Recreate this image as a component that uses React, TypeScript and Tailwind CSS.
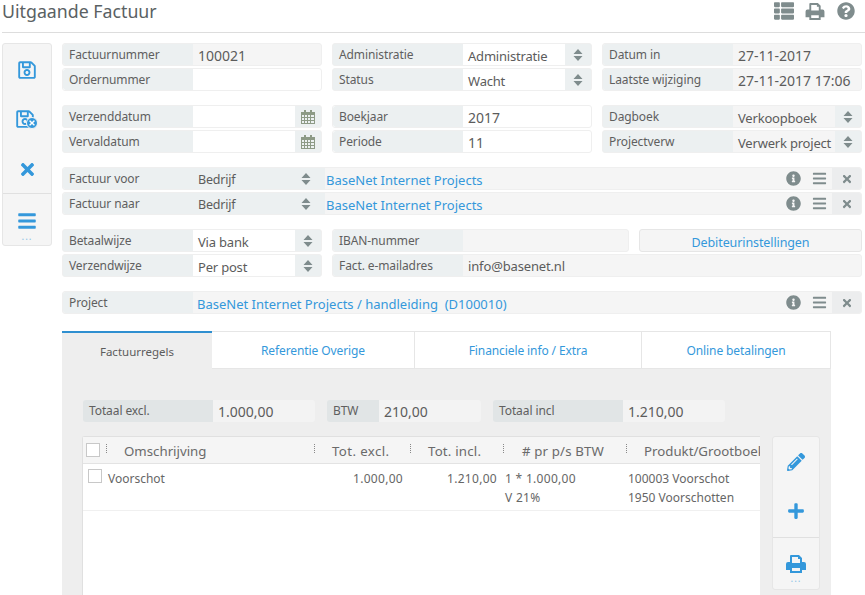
import React from 'react';
import { FaBars, FaInfoCircle, FaPencilAlt, FaPlus, FaQuestionCircle, FaRegSave, FaThList, FaTimes } from 'react-icons/fa';

const PrintIcon = ({ className }: { className?: string }) => (
  <svg viewBox="0 0 20 18" className={className} fill="currentColor">
    <path fillRule="evenodd" d="M5 0h8l3 3v4h2a2 2 0 0 1 2 2v6h-4v3H4v-3H0V9a2 2 0 0 1 2-2h2V1a1 1 0 0 1 1-1zm1 2v6h8V4h-2V2H6zM6 13v3h8v-3H6z" />
  </svg>
);

const SortIcon = ({ className = '' }: { className?: string }) => (
  <svg viewBox="0 0 10 12" className={`w-[10px] h-[12px] ${className}`} fill="currentColor">
    <path d="M5 0l4.5 5H.5zM5 12L.5 7h9z" />
  </svg>
);

const CalendarIcon = () => (
  <svg viewBox="0 0 14 14" className="w-[14px] h-[14px]" fill="currentColor">
    <path fillRule="evenodd" d="M3 0h2v2h4V0h2v2h3v12H0V2h3zM1 5v2h2V5zm3 0v2h2V5zm3 0v2h2V5zm3 0v2h3V5zM1 8v2h2V8zm3 0v2h2V8zm3 0v2h2V8zm3 0v2h3V8zM1 11v2h2v-2zm3 0v2h2v-2zm3 0v2h2v-2zm3 0v2h3v-2z" />
  </svg>
);

const SaveCancelIcon = () => (
  <div className="relative w-[22px] h-[20px]">
    <FaRegSave className="w-[20px] h-[20px] -ml-[1px]" />
    <div className="absolute right-0 bottom-0 w-[12px] h-[12px] rounded-full bg-[#3498db] border border-[#f5f5f5] flex items-center justify-center">
      <FaTimes className="w-[8px] h-[8px] text-white" />
    </div>
  </div>
);

const Label = ({ children }: { children: React.ReactNode }) => (
  <div className="w-[130px] shrink-0 bg-[#ecf0f1] pl-[6px] h-full flex items-center text-[12px] tracking-[-0.1px] text-[#5f5f5f] rounded-l-[3px]">
    {children}
  </div>
);

const Row = ({ className = '', children }: { className?: string; children: React.ReactNode }) => (
  <div className={`h-[23px] flex items-stretch rounded-[3px] border border-[#efefef] overflow-hidden ${className}`}>{children}</div>
);

const TextField = ({ label, value }: { label: string; value?: string }) => (
  <Row className="bg-white">
    <Label>{label}</Label>
    <div className="flex-1 pl-[5px] pt-[1px] flex items-center text-[14px] text-[#5c5c5c] whitespace-nowrap">{value}</div>
  </Row>
);

const ReadField = ({ label, value, small }: { label: string; value?: string; small?: boolean }) => (
  <Row className="bg-[#f5f5f5]">
    <Label>{label}</Label>
    <div className={`flex-1 pl-[5px] flex items-center ${small ? 'pt-[3px] text-[13px] tracking-[-0.15px]' : 'pt-[1px] text-[14px]'} text-[#5c5c5c] whitespace-nowrap`}>{value}</div>
  </Row>
);

const DateField = ({ label }: { label: string }) => (
  <Row className="bg-[#ecf0f1]">
    <Label>{label}</Label>
    <div className="w-[102px] bg-white" />
    <div className="flex-1 flex items-center justify-center text-[#8d9a86]">
      <CalendarIcon />
    </div>
  </Row>
);

const SelectField = ({ label, value, white = true }: { label: string; value: string; white?: boolean }) => (
  <Row className="bg-[#ecf0f1]">
    <Label>{label}</Label>
    <div className={`w-[102px] ${white ? 'bg-white' : 'bg-[#f5f5f5]'} pl-[5px] pt-[4px] flex items-center text-[13px] tracking-[-0.2px] text-[#5c5c5c] whitespace-nowrap overflow-hidden`}>{value}</div>
    <div className="flex-1 flex items-center justify-center text-[#7f8c8d]">
      <SortIcon />
    </div>
  </Row>
);

const RowActions = () => (
  <div className="flex items-center text-[#7f8c8d]">
    <FaInfoCircle className="w-[15px] h-[15px] mr-[11px]" />
    <FaBars className="w-[15px] h-[15px] mr-[5px]" />
    <div className="w-[29px] h-[23px] bg-[#ecedee] flex items-center justify-center">
      <FaTimes className="w-[12px] h-[12px]" />
    </div>
  </div>
);

const RelationRow = ({ label }: { label: string }) => (
  <Row className="bg-[#f5f5f5]">
    <Label>{label}</Label>
    <div className="w-[132px] bg-[#ecf0f1] flex items-center text-[12.5px] tracking-[-0.2px] text-[#5c5c5c]">
      <div className="flex-1 pl-[5px] pt-[3px]">Bedrijf</div>
      <SortIcon className="mr-[14px] text-[#7f8c8d]" />
    </div>
    <div className="flex-1 pl-[1px] pt-[4px] flex items-center text-[13px] text-[#3498db]">BaseNet Internet Projects</div>
    <RowActions />
  </Row>
);

const SideButton = ({ children }: { children: React.ReactNode }) => (
  <div className="flex items-center justify-center text-[#3498db]">{children}</div>
);

const Dots = () => <div className="mt-[2px] h-[8px] text-[10px] leading-[6px] text-center tracking-[1px] text-[#8fc3e6]">...</div>;

const Tab = ({ w, active, children }: { w: string; active?: boolean; children: React.ReactNode }) => (
  <div className={`${w} h-[38px] flex items-center justify-center pt-[1px] ${active ? 'text-[11.5px] bg-[#eeeeee] border-t-2 border-[#2f8fd0] text-[#5c5c5c]' : 'text-[12px] tracking-[-0.1px] bg-white border-t border-r border-b border-[#e6e6e6] text-[#3498db]'}`}>
    {children}
  </div>
);

const Total = ({ label, value, lw }: { label: string; value: string; lw: string }) => (
  <div className="flex h-[22px] rounded-[3px] overflow-hidden">
    <div className={`${lw} bg-[#e1e5e6] pl-[6px] flex items-center text-[12px] tracking-[-0.1px] text-[#5f5f5f]`}>{label}</div>
    <div className="w-[102px] bg-[#f3f3f3] pl-[5px] flex items-center text-[14px] text-[#5c5c5c]">{value}</div>
  </div>
);

const Handle = () => <div className="w-[1px] h-[9px] -mt-[4px] shrink-0 border-l border-dotted border-[#888888]" />;

const HeadCell = ({ w, className = '', children }: { w: string; className?: string; children: React.ReactNode }) => (
  <div className={`${w} shrink-0 pl-[17px] pt-[4px] whitespace-nowrap ${className}`}>{children}</div>
);

const App = () => {
  return (
    <div className="w-[865px] h-[595px] overflow-hidden bg-white font-['Noto_Sans','Open_Sans',sans-serif]">
      <div className="h-[33px] ml-[2px] border-b border-[#dddddd] flex items-center justify-between pb-[10px]">
        <h1 className="text-[17.75px] text-[#5a6163]">Uitgaande Factuur</h1>
        <div className="flex items-center mr-[10px] text-[#7f8c8d]">
          <FaThList className="w-[20px] h-[20px] mr-[11px]" />
          <PrintIcon className="w-[20px] h-[17px] mr-[12px]" />
          <FaQuestionCircle className="w-[18px] h-[18px]" />
        </div>
      </div>

      <div className="flex mt-[10px] ml-[2px]">
        {/* side toolbar */}
        <div className="w-[50px] h-[203px] shrink-0 bg-[#f5f5f5] border border-[#e6e6e6] rounded-[3px] flex flex-col">
          <div className="h-[150px] flex flex-col justify-around pt-[3px] border-b border-[#e0e0e0]">
            <SideButton><FaRegSave className="w-[20px] h-[20px] -mt-[2px]" /></SideButton>
            <SideButton><SaveCancelIcon /></SideButton>
            <SideButton><FaTimes className="w-[19px] h-[19px] mt-[2px]" /></SideButton>
          </div>
          <div className="flex-1 pt-[17px]">
            <SideButton><FaBars className="w-[20px] h-[20px]" /></SideButton>
            <Dots />
          </div>
        </div>

        <div className="ml-[10px] w-[800px]">
          <div className="grid grid-cols-[260px_260px_260px] gap-x-[10px] gap-y-[2px]">
            <ReadField label="Factuurnummer" value="100021" />
            <SelectField label="Administratie" value="Administratie" />
            <ReadField label="Datum in" value="27-11-2017" />
            <TextField label="Ordernummer" />
            <SelectField label="Status" value="Wacht" />
            <ReadField label="Laatste wijziging" value="27-11-2017 17:06" />
          </div>

          <div className="mt-[14px] grid grid-cols-[260px_260px_260px] gap-x-[10px] gap-y-[2px]">
            <DateField label="Verzenddatum" />
            <TextField label="Boekjaar" value="2017" />
            <SelectField label="Dagboek" value="Verkoopboek" white={false} />
            <DateField label="Vervaldatum" />
            <TextField label="Periode" value="11" />
            <SelectField label="Projectverw" value="Verwerk project" white={false} />
          </div>

          <div className="mt-[14px] flex flex-col gap-y-[2px]">
            <RelationRow label="Factuur voor" />
            <RelationRow label="Factuur naar" />
          </div>

          <div className="mt-[14px] grid grid-cols-[260px_297px_223px] gap-x-[10px] gap-y-[2px]">
            <SelectField label="Betaalwijze" value="Via bank" />
            <Row className="bg-[#f5f5f5]"><Label>IBAN-nummer</Label></Row>
            <div className="h-[23px] bg-[#f5f5f5] border border-[#e6e6e6] rounded-[3px] flex items-center justify-center pt-[5px] text-[12.5px] tracking-[-0.1px] text-[#3498db]">Debiteurinstellingen</div>
            <SelectField label="Verzendwijze" value="Per post" />
            <div className="col-span-2">
              <ReadField label="Fact. e-mailadres" value="info@basenet.nl" small />
            </div>
          </div>

          <div className="mt-[14px]">
            <Row className="bg-[#f5f5f5]">
              <Label>Project</Label>
              <div className="flex-1 pl-[4px] pt-[4px] flex items-center text-[13px] text-[#3498db] whitespace-pre">BaseNet Internet Projects / handleiding  (D100010)</div>
              <RowActions />
            </Row>
          </div>

          {/* tabs */}
          <div className="mt-[17px] w-[769px]">
            <div className="flex">
              <Tab w="w-[150px]" active>Factuurregels</Tab>
              <Tab w="w-[203px]">Referentie Overige</Tab>
              <Tab w="w-[227px]">Financiele info / Extra</Tab>
              <Tab w="w-[189px]">Online betalingen</Tab>
            </div>
            <div className="h-[226px] bg-[#eeeeee] pt-[31px] pl-[20px]">
              <div className="ml-[1px] flex gap-x-[12px]">
                <Total label="Totaal excl." value="1.000,00" lw="w-[130px]" />
                <Total label="BTW" value="210,00" lw="w-[52px]" />
                <Total label="Totaal incl" value="1.210,00" lw="w-[130px]" />
              </div>

              <div className="mt-[14px] flex items-start">
                <div className="w-[678px] h-[170px] bg-white border-l border-t border-[#e0e0e0] rounded-tl-[3px]">
                  <div className="h-[27px] bg-[#f5f5f5] border-b border-[#e3e3e3] flex items-center text-[13.25px] text-[#6a6a6a] overflow-hidden">
                    <div className="w-[14px] h-[14px] ml-[3px] mr-[6px] bg-white border border-[#c8c8c8] shrink-0" />
                    <Handle />
                    <HeadCell w="w-[207px]">Omschrijving</HeadCell>
                    <Handle />
                    <HeadCell w="w-[95px]" className="tracking-[0.4px]">Tot. excl.</HeadCell>
                    <Handle />
                    <HeadCell w="w-[92px]" className="tracking-[0.2px]">Tot. incl.</HeadCell>
                    <Handle />
                    <HeadCell w="w-[122px]" className="pl-[18px] tracking-[0.15px]"># pr p/s BTW</HeadCell>
                    <Handle />
                    <HeadCell w="w-[130px]">Produkt/Grootboek</HeadCell>
                  </div>
                  <div className="h-[47px] border-b border-[#f0f0f0] flex text-[12px] leading-[19px] text-[#666666] pt-[5px] overflow-hidden">
                    <div className="w-[14px] h-[14px] ml-[5px] mr-[6px] bg-white border border-[#c8c8c8] shrink-0" />
                    <div className="w-[190px] shrink-0">Voorschot</div>
                    <div className="w-[105px] shrink-0 text-right tracking-[0.3px]">1.000,00</div>
                    <div className="w-[94px] shrink-0 text-right tracking-[0.3px]">1.210,00</div>
                    <div className="w-[131px] shrink-0 pl-[8px] tracking-[0.3px]">1 * 1.000,00<br />V 21%</div>
                    <div className="whitespace-nowrap">100003 Voorschot<br />1950 Voorschotten</div>
                  </div>
                </div>

                <div className="ml-[12px] w-[48px] h-[154px] bg-[#f5f5f5] border border-[#e6e6e6] rounded-[3px] flex flex-col text-[#3498db]">
                  <div className="h-[101px] border-b border-[#e0e0e0] flex flex-col justify-around pb-[2px]">
                    <SideButton><FaPencilAlt className="w-[18px] h-[18px]" /></SideButton>
                    <SideButton><FaPlus className="w-[18px] h-[18px]" /></SideButton>
                  </div>
                  <div className="flex-1 pt-[17px]">
                    <SideButton><PrintIcon className="w-[20px] h-[18px]" /></SideButton>
                    <Dots />
                  </div>
                </div>
              </div>
            </div>
          </div>
        </div>
      </div>
    </div>
  );
};

export default App;
